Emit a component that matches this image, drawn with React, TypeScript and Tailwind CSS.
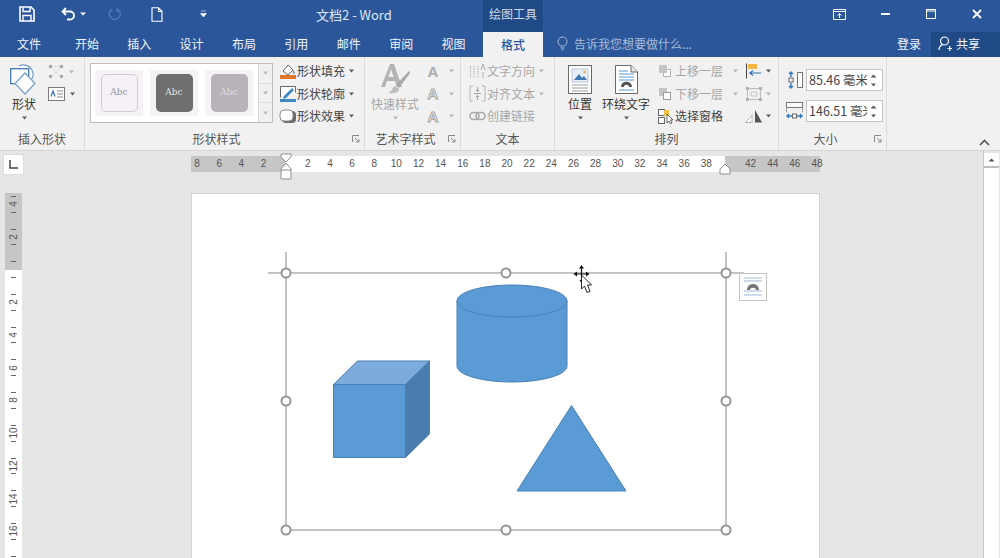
import React from "react";

const TABS = ["插入", "设计", "布局", "引用", "邮件", "审阅", "视图"];
const RULER_LEFT = ["8", "6", "4", "2", ""];
const RULER_MID = ["2", "4", "6", "8", "10", "12", "14", "16", "18", "20", "22", "24", "26", "28", "30", "32", "34", "36", "38", "", "42", "44", "46", "48"];
const RULER_V = ["4", "2", "", "2", "4", "6", "8", "10", "12", "14", "16", ""];

const Caret = ({ light = false }: { light?: boolean }) => (
  <svg width="7" height="4" viewBox="0 0 7 4" className="shrink-0">
    <path d="M1 0.5h5L3.500 3.500z" fill={light ? "#b5b5b5" : "#5a5a5a"} />
  </svg>
);

const Launcher = () => (
  <svg width="8" height="8" viewBox="0 0 8 8" className="shrink-0">
    <path d="M0.500 7V0.500H7M3 3l4 4M7 4v3H4" fill="none" stroke="#8a8a8a" strokeWidth="1" />
  </svg>
);

const Group = ({
  label,
  width,
  labelPad = "",
  launcher,
  children,
}: {
  label: string;
  width: string;
  labelPad?: string;
  launcher?: boolean;
  children: React.ReactNode;
}) => (
  <div className={`${width} h-full shrink-0 flex flex-col border-r border-[#dcdcdc]`}>
    <div className="h-[73px] flex items-start">{children}</div>
    <div className="flex-1 flex items-center px-1 pb-[3px]">
      <span className={`flex-1 text-center text-[12px] leading-none text-[#555] ${labelPad}`}>{label}</span>
      {launcher && <Launcher />}
    </div>
  </div>
);

const ShapesIcon = () => (
  <svg width="29" height="32" viewBox="0 0 29 32">
    <path d="M9 3a9.500 9.500 0 1 1 9 17" fill="#fff" stroke="#6d9ac6" strokeWidth="1.200" />
    <rect x="0.700" y="5.700" width="18" height="15" fill="#fff" stroke="#3f78ae" strokeWidth="1.300" />
    <path d="M15 10l10 10.500L15 31 5 20.500z" fill="#fff" stroke="#7aa3cb" strokeWidth="1.300" />
  </svg>
);

const EditPointsIcon = () => (
  <svg width="16" height="15" viewBox="0 0 16 15">
    <path d="M3 3L13 2M13 2L8 8M3 3l5 5M8 8l-5 5M8 8l5 5" fill="none" stroke="#cfcfcf" strokeDasharray="2 1.500" />
    <g fill="#a8a8a8">
      <rect x="1" y="1" width="3" height="3" />
      <rect x="12" y="1" width="3" height="3" />
      <rect x="1" y="11" width="3" height="3" />
      <rect x="12" y="11" width="3" height="3" />
    </g>
  </svg>
);

const TextBoxIcon = () => (
  <svg width="17" height="14" viewBox="0 0 17 14">
    <rect x="0.500" y="0.500" width="16" height="13" fill="#fff" stroke="#7a7a7a" />
    <path d="M3 9.500L5 4l2 5.500" fill="none" stroke="#2f6fb0" strokeWidth="1.200" />
    <path d="M9 4h6M9 7h6M9 10h6" stroke="#8a8a8a" />
  </svg>
);

const FillIcon = () => (
  <svg width="18" height="18" viewBox="0 0 18 18">
    <path d="M4 9l5-6 5 5-5 5z" fill="#fff" stroke="#666" />
    <path d="M14 8c2 2 2 4 1 4s-1-2-1-4z" fill="#3f86c6" />
    <rect x="1" y="13" width="16" height="4" fill="#e0752d" />
  </svg>
);

const OutlineIcon = () => (
  <svg width="18" height="18" viewBox="0 0 18 18">
    <path d="M1.500 12.500V1.500h15v6" fill="#fff" stroke="#666" />
    <path d="M5 11l8-8 2 2-8 8-3 1z" fill="#3f86c6" />
    <rect x="1" y="14" width="16" height="3" fill="#3f86c6" />
  </svg>
);

const EffectIcon = () => (
  <svg width="18" height="15" viewBox="0 0 18 15">
    <rect x="3" y="2" width="14" height="12" rx="4" fill="#6b6b6b" />
    <rect x="1" y="1" width="13" height="11" rx="4" fill="#fff" stroke="#8a8a8a" />
  </svg>
);

const QuickStyleIcon = () => (
  <svg width="32" height="32" viewBox="0 0 32 32">
    <path d="M2 24L11 1h4l8 23h-5l-2-6H8l-2 6zM9.500 14h5L12 6z" fill="#b4b4b4" fillRule="evenodd" />
    <path d="M30 8L17 22l3 3L31 10z" fill="#a8a8a8" />
    <path d="M16 23c-3 1-2 5-7 7 5 1 11 0 11-4z" fill="#bdbdbd" />
  </svg>
);

const SmallA = ({ outline = false }: { outline?: boolean }) => (
  <span
    className={`w-[14px] text-center text-[15px] leading-none font-bold [font-family:'Liberation_Sans',sans-serif] ${
      outline ? "text-[#f1f1f1] [-webkit-text-stroke:1px_#a9a9a9]" : "text-[#a9a9a9]"
    }`}
  >
    A
  </span>
);

const TextDirIcon = () => (
  <svg width="17" height="16" viewBox="0 0 17 16">
    <path d="M1.500 3v12M5 3v12M9 3v12" stroke="#b0b0b0" strokeDasharray="1.500 1" />
    <path d="M12 7l2-6 2 6" fill="none" stroke="#b0b0b0" />
    <path d="M14 9v6" stroke="#b0b0b0" />
  </svg>
);

const AlignIcon = () => (
  <svg width="17" height="17" viewBox="0 0 17 17">
    <path d="M4 1H1v15h3M13 1h3v15h-3" fill="none" stroke="#b5b5b5" />
    <path d="M5 8.500h7M8.500 2v4M8.500 11v4" stroke="#a0a0a0" />
    <path d="M6.500 5h4L8.500 7zM6.500 12h4l-2-2z" fill="#a0a0a0" />
  </svg>
);

const LinkIcon = () => (
  <svg width="17" height="10" viewBox="0 0 17 10">
    <rect x="1" y="1.500" width="9" height="7" rx="3.500" fill="none" stroke="#a9a9a9" strokeWidth="1.600" />
    <rect x="7" y="1.500" width="9" height="7" rx="3.500" fill="none" stroke="#a9a9a9" strokeWidth="1.600" />
  </svg>
);

const PositionIcon = () => (
  <svg width="24" height="29" viewBox="0 0 24 29">
    <rect x="0.500" y="0.500" width="23" height="28" fill="#fff" stroke="#6a6a6a" />
    <path d="M4 4h16v13H4z" fill="#e8eef6" stroke="#b8c6d8" />
    <path d="M6 15l5-6 3 4 2-2 3 4z" fill="#3f78b4" />
    <circle cx="16.500" cy="7" r="1.200" fill="#e8a33d" />
    <path d="M4 20h16M4 23h16M4 26h16" stroke="#a0a0a0" />
  </svg>
);

const WrapIcon = () => (
  <svg width="23" height="29" viewBox="0 0 23 29">
    <path d="M0.500 0.500H16L22.500 7V28.500H0.500z" fill="#fff" stroke="#6a6a6a" />
    <path d="M16 0.500V7h6.500" fill="#e6e6e6" stroke="#6a6a6a" />
    <path d="M4 6h9M4 9h15M4 12h15M4 15h15M4 25h15" stroke="#5b9bd5" />
    <path d="M6 22c0-7 11-7 11 0h-3c0-3-5-3-5 0z" fill="#555" />
  </svg>
);

const LayerIcon = ({ up }: { up: boolean }) => (
  <svg width="15" height="14" viewBox="0 0 15 14">
    {up ? (
      <>
        <rect x="5.500" y="5.500" width="7" height="7" fill="#fff" stroke="#b5b5b5" />
        <rect x="1" y="1" width="8" height="8" fill="#c4c4c4" />
      </>
    ) : (
      <>
        <rect x="1" y="1" width="8" height="8" fill="#c4c4c4" />
        <rect x="5.500" y="5.500" width="7" height="7" fill="#fff" stroke="#9a9a9a" />
      </>
    )}
  </svg>
);

const SelectionIcon = () => (
  <svg width="16" height="16" viewBox="0 0 16 16">
    <rect x="0.500" y="1.500" width="6" height="6" fill="#fff" stroke="#666" />
    <rect x="0.500" y="9.500" width="6" height="6" fill="#fff" stroke="#666" />
    <rect x="6" y="2" width="5" height="6" fill="#f0c040" />
    <path d="M9 6v9l2-2 1.500 3 1.500-1-1.500-3h2.500z" fill="#fff" stroke="#444" strokeWidth="0.800" />
  </svg>
);

const AlignObjIcon = () => (
  <svg width="18" height="16" viewBox="0 0 18 16">
    <path d="M1.500 0.500v15" stroke="#444" />
    <rect x="3" y="1" width="9" height="5" fill="#f0b840" />
    <path d="M16 10H5M8 7.500L5 10l3 2.500" fill="none" stroke="#2f6fb0" strokeWidth="1.200" />
  </svg>
);

const GroupObjIcon = () => (
  <svg width="18" height="16" viewBox="0 0 18 16">
    <rect x="2.500" y="2.500" width="13" height="11" fill="none" stroke="#bdbdbd" />
    <path d="M6 6h6v4H6z" fill="none" stroke="#c9c9c9" />
    <g fill="#b0b0b0">
      <rect x="1" y="1" width="3" height="3" />
      <rect x="14" y="1" width="3" height="3" />
      <rect x="1" y="12" width="3" height="3" />
      <rect x="14" y="12" width="3" height="3" />
    </g>
  </svg>
);

const RotateIcon = () => (
  <svg width="18" height="15" viewBox="0 0 18 15">
    <path d="M1 13.500L7 6v7.500z" fill="#fff" stroke="#999" strokeDasharray="2 1" />
    <path d="M10 1l7 12.500h-7z" fill="#555" />
  </svg>
);

const HeightIcon = () => (
  <svg width="17" height="18" viewBox="0 0 17 18">
    <rect x="11.500" y="1.500" width="5" height="15" fill="#fff" stroke="#777" />
    <path d="M5 1v5M5 12v5M3 3l2-2 2 2M3 15l2 2 2-2" fill="none" stroke="#2f78c0" strokeWidth="1.400" />
    <rect x="3" y="7" width="4" height="4" fill="#fff" stroke="#666" />
  </svg>
);

const WidthIcon = () => (
  <svg width="17" height="18" viewBox="0 0 17 18">
    <rect x="0.500" y="0.500" width="16" height="5" fill="#fff" stroke="#777" />
    <path d="M0.500 5.500v5M16.500 5.500v5" stroke="#999" />
    <path d="M1 14h5M11 14h5M3 12l-2 2 2 2M14 12l2 2-2 2" fill="none" stroke="#2f78c0" strokeWidth="1.400" />
    <rect x="6.500" y="12" width="4" height="4" fill="#fff" stroke="#666" />
  </svg>
);

const ListRow = ({
  icon,
  text,
  muted,
  caret = true,
  caretGap = "ml-[3px]",
}: {
  icon: React.ReactNode;
  text: string;
  muted?: boolean;
  caret?: boolean;
  caretGap?: string;
}) => (
  <div className="h-[22.500px] flex items-center">
    <div className="w-[19px] flex justify-center shrink-0">{icon}</div>
    <span className={`text-[12px] leading-none whitespace-nowrap ${muted ? "text-[#a6a6a6]" : "text-[#444]"}`}>{text}</span>
    {caret && (
      <span className={caretGap}>
        <Caret light={muted} />
      </span>
    )}
  </div>
);

const Thumb = ({ box, text }: { box: string; text: string }) => (
  <div className="w-[48px] h-[46px] bg-[#f5f3f6] flex items-center justify-center">
    <div
      className={`w-[37px] h-[38px] rounded-[5px] flex items-center justify-center text-[9px] [font-family:'DejaVu_Serif',serif] ${box} ${text}`}
    >
      Abc
    </div>
  </div>
);

const BigButton = ({
  icon,
  label,
  muted,
  width,
}: {
  icon: React.ReactNode;
  label: string;
  muted?: boolean;
  width: string;
}) => (
  <div className={`${width} flex flex-col items-center shrink-0`}>
    <div className="h-[32px] mt-[6px] flex items-center justify-center">{icon}</div>
    <span className={`mt-[1px] text-[12px] leading-[16px] whitespace-nowrap ${muted ? "text-[#a6a6a6]" : "text-[#333]"}`}>{label}</span>
    <span className="mt-[4px] leading-none flex">
      <Caret light={muted} />
    </span>
  </div>
);

const Spin = ({ text }: { text: string }) => (
  <div className="w-[77px] h-[22px] bg-white border border-[#c4c4c4] flex items-center pl-[2px] pr-[2px]">
    <span className="w-[58px] overflow-hidden whitespace-nowrap text-[12.500px] leading-none text-[#444]">{text}</span>
    <div className="flex-1 flex flex-col items-center gap-[5px]">
      <svg width="7" height="4" viewBox="0 0 7 4">
        <path d="M0.500 3.500h6L3.500 0.500z" fill="#555" />
      </svg>
      <Caret />
    </div>
  </div>
);

const Canvas = () => (
  <svg width="628" height="364" viewBox="192 194 628 364" className="absolute left-0 top-0">
    <path d="M286 252v278M268 273h18M726 252v278M726 273h18M286 273h440M286 530h440" fill="none" stroke="#b0b0b0" strokeWidth="1.500" />
    <path
      d="M457 301V366C457 375 482 382 512 382S567 375 567 366V301C567 292 542 285 512 285S457 292 457 301Z"
      fill="#5b9bd5"
      stroke="#4a80b5"
      strokeWidth="1"
    />
    <path d="M457 301C457 310 482 317 512 317S567 310 567 301" fill="none" stroke="#4a80b5" />
    <path d="M333.500 384.500H405.500V457.500H333.500Z" fill="#5b9bd5" stroke="#4a80b5" />
    <path d="M333.500 384.500L357.500 361H429.500L405.500 384.500Z" fill="#7cabdc" stroke="#4a80b5" />
    <path d="M405.500 384.500L429.500 361V434L405.500 457.500Z" fill="#4a7cae" stroke="#4a80b5" />
    <path d="M571.500 405.500L626 491H517Z" fill="#5b9bd5" stroke="#4a80b5" />
    {[
      [286, 273],
      [506, 273],
      [726, 273],
      [286, 401],
      [726, 401],
      [286, 530],
      [506, 530],
      [726, 530],
    ].map(([cx, cy]) => (
      <circle key={`${cx}-${cy}`} cx={cx} cy={cy} r="4.500" fill="#fff" stroke="#949494" strokeWidth="2" />
    ))}
    <g>
      <rect x="739.500" y="273.500" width="27" height="27" fill="#fff" stroke="#c3c3c3" />
      <path d="M744 278h18M744 281h18M744 291h18M744 295h18" stroke="#9db6d0" strokeWidth="1.200" />
      <path d="M747 290c0-8 12-8 12 0h-3c0-3-6-3-6 0z" fill="#777" />
    </g>
    <g>
      <path d="M581.500 268v12M575 274h13" stroke="#111" strokeWidth="1.200" />
      <path d="M581.500 265l-2.500 3.500h5zM581.500 283l-2-3h4zM573.500 274l3.500-2.500v5zM589.500 274l-3.500-2.500v5z" fill="#111" />
      <path d="M581.500 275v14l3-3 2.500 6.500 3-1.200-2.500-6.300h4z" fill="#fff" stroke="#111" strokeWidth="0.900" />
    </g>
  </svg>
);

export default function App() {
  return (
    <div className="w-[1000px] h-[558px] overflow-hidden flex flex-col bg-[#e6e6e6] [font-family:'Noto_Sans_CJK_SC','Liberation_Sans',sans-serif]">
      {/* title bar */}
      <div className="h-[32px] shrink-0 bg-[#2b579a] flex text-white">
        <div className="w-[483px] flex items-center pb-[4px] shrink-0">
          <svg width="16" height="16" viewBox="0 0 16 16" className="ml-[19px]">
            <path d="M1 1h11l3 3v11H1z" fill="none" stroke="#fff" strokeWidth="1.600" />
            <path d="M4 1.500v4h7v-4M4 15V9.500h8V15" fill="none" stroke="#fff" strokeWidth="1.400" />
          </svg>
          <svg width="16" height="14" viewBox="0 0 16 14" className="ml-[26px]">
            <path d="M5 1L1.500 4.500 5 8M2 4.500h7a4 4 0 0 1 0 8H6" fill="none" stroke="#fff" strokeWidth="1.800" />
          </svg>
          <span className="ml-[3px]">
            <svg width="6" height="4" viewBox="0 0 6 4">
              <path d="M0 0.500h6L3 3.500z" fill="#fff" />
            </svg>
          </span>
          <svg width="14" height="14" viewBox="0 0 14 14" className="ml-[22px]">
            <path d="M9 2a5.500 5.500 0 1 1-4.500 0M9 0.500V4H12.500" fill="none" stroke="#4f78b3" strokeWidth="1.500" />
          </svg>
          <svg width="12" height="15" viewBox="0 0 12 15" className="ml-[29px]">
            <path d="M1 0.800h6.500L11 4.300v10H1z M7.500 1v3.500H11" fill="none" stroke="#fff" strokeWidth="1.100" />
          </svg>
          <svg width="7" height="8" viewBox="0 0 7 8" className="ml-[37px]">
            <path d="M1 1h5M0.500 3.500h6L3.500 7z" fill="#fff" stroke="#fff" strokeWidth="0.600" />
          </svg>
          <span className="ml-[109px] text-[13px] leading-none text-[#dfe7f3]">文档2 - Word</span>
        </div>
        <div className="w-[60px] bg-[#1f4a85] flex items-center justify-center pb-[4px] text-[12px] leading-none text-[#cfd9e8] shrink-0">
          绘图工具
        </div>
        <div className="flex-1 flex items-center pb-[4px]">
          <svg width="13" height="11" viewBox="0 0 13 11" className="ml-[290px]">
            <path d="M0.500 0.500h12v10h-12zM0.500 2.500h12M6.500 9V4.500M4.500 6.500l2-2 2 2" fill="none" stroke="#fff" />
          </svg>
          <div className="ml-[35px] w-[9px] h-[2px] bg-white" />
          <svg width="10" height="10" viewBox="0 0 10 10" className="ml-[36px]">
            <path d="M0.500 0.500h9v9h-9zM0.500 2h9" fill="none" stroke="#fff" strokeWidth="1.100" />
          </svg>
          <svg width="10" height="10" viewBox="0 0 10 10" className="ml-[36px]">
            <path d="M1 1l8 8M9 1l-8 8" stroke="#fff" strokeWidth="1.800" />
          </svg>
        </div>
      </div>

      {/* tabs */}
      <div className="h-[25px] shrink-0 bg-[#2b579a] flex items-center text-[12px] leading-none text-[#f2f5fa]">
        <span className="w-[58px] text-center pb-[2px]">文件</span>
        <span className="w-[52px] ml-[3px] text-center pb-[2px]">开始</span>
        {TABS.map((t) => (
          <span key={t} className="w-[52.400px] text-center pb-[2px]">
            {t}
          </span>
        ))}
        <div className="ml-[3.200px] w-[60px] h-full bg-[#f1f1f1] text-[#2b579a] flex items-center justify-center font-medium">格式</div>
        <div className="ml-[14px] flex items-center gap-[6px] pb-[2px] text-[#a9bcd8] text-[12px]">
          <svg width="11" height="15" viewBox="0 0 11 15">
            <path d="M3.500 10C2 8.500 1 7.500 1 5.500a4.500 4.500 0 0 1 9 0C10 7.500 9 8.500 7.500 10zM3.500 12h4M4.500 14h2" fill="none" stroke="#a9bcd8" />
          </svg>
          告诉我您想要做什么...
        </div>
        <span className="ml-auto pb-[2px]">登录</span>
        <div className="ml-[10px] w-[69px] h-full bg-[#1f4a85] flex items-center pl-[7px] gap-[4px] pb-[2px]">
          <svg width="14" height="15" viewBox="0 0 14 15">
            <circle cx="6.500" cy="5" r="4" fill="none" stroke="#fff" strokeWidth="1.200" />
            <path d="M1 14c0-3 1.500-4.500 3.500-5.500M9.500 12.500h4.500M11.750 10v5" fill="none" stroke="#fff" strokeWidth="1.200" />
          </svg>
          共享
        </div>
      </div>

      {/* ribbon */}
      <div className="h-[94px] shrink-0 bg-[#f1f1f1] border-b border-[#d4d4d4] flex">
        <Group label="插入形状" width="w-[85px]">
          <BigButton icon={<ShapesIcon />} label="形状" width="w-[48px]" />
          <div className="pt-[7px] flex flex-col gap-[7px]">
            <div className="h-[15px] flex items-center gap-[4px]">
              <EditPointsIcon />
              <Caret light />
            </div>
            <div className="h-[15px] flex items-center gap-[4px]">
              <TextBoxIcon />
              <Caret />
            </div>
          </div>
        </Group>

        <Group label="形状样式" width="w-[280px]" labelPad="pr-[8px]" launcher>
          <div className="ml-[5px] mt-[6px] w-[183px] h-[60px] bg-white border border-[#bdbdbd] flex shrink-0">
            <div className="flex-1 flex items-center gap-[7px] pl-[4px]">
              <Thumb box="bg-[#f5f1f6] border border-[#d3c9d6]" text="text-[#9b94a0]" />
              <Thumb box="bg-[#6f6f6f]" text="text-[#e4e4e4]" />
              <Thumb box="bg-[#b8b3ba]" text="text-[#e2dee4]" />
            </div>
            <div className="w-[14px] flex flex-col bg-[#f1f1f1] border-l border-[#d9d9d9] text-[#b5b5b5]">
              {[0, 1, 2].map((i) => (
                <div key={i} className="flex-1 flex items-center justify-center border-b border-[#dedede] last:border-b-0">
                  <Caret light />
                </div>
              ))}
            </div>
          </div>
          <div className="ml-[5px] mt-[3px] flex flex-col">
            <ListRow icon={<FillIcon />} text="形状填充" />
            <ListRow icon={<OutlineIcon />} text="形状轮廓" />
            <ListRow icon={<EffectIcon />} text="形状效果" />
          </div>
        </Group>

        <Group label="艺术字样式" width="w-[96px]" labelPad="pr-[6px]" launcher>
          <BigButton icon={<QuickStyleIcon />} label="快速样式" muted width="w-[60px]" />
          <div className="ml-[1px] mt-[3px] flex flex-col">
            {[false, true, true].map((o, i) => (
              <div key={i} className="h-[22.500px] flex items-center gap-[8px]">
                <SmallA outline={o} />
                <Caret light />
              </div>
            ))}
          </div>
        </Group>

        <Group label="文本" width="w-[94px]">
          <div className="ml-[7px] mt-[3px] flex flex-col">
            <ListRow icon={<TextDirIcon />} text="文字方向" muted />
            <ListRow icon={<AlignIcon />} text="对齐文本" muted />
            <ListRow icon={<LinkIcon />} text="创建链接" muted caret={false} />
          </div>
        </Group>

        <Group label="排列" width="w-[224px]">
          <BigButton icon={<PositionIcon />} label="位置" width="w-[50px]" />
          <div className="-ml-[3px]">
            <BigButton icon={<WrapIcon />} label="环绕文字" width="w-[48px]" />
          </div>
          <div className="ml-[6px] mt-[3px] flex flex-col w-[89px]">
            <ListRow icon={<LayerIcon up />} text="上移一层" muted caretGap="ml-[9px]" />
            <ListRow icon={<LayerIcon up={false} />} text="下移一层" muted caretGap="ml-[9px]" />
            <ListRow icon={<SelectionIcon />} text="选择窗格" caret={false} />
          </div>
          <div className="mt-[3px] flex flex-col">
            <div className="h-[22.500px] flex items-center gap-[2px]">
              <AlignObjIcon />
              <Caret />
            </div>
            <div className="h-[22.500px] flex items-center gap-[2px]">
              <GroupObjIcon />
              <Caret light />
            </div>
            <div className="h-[22.500px] flex items-center gap-[2px]">
              <RotateIcon />
              <Caret />
            </div>
          </div>
        </Group>

        <Group label="大小" width="w-[108px]" labelPad="pr-[6px]" launcher>
          <div className="ml-[7px] mt-[12px] flex flex-col gap-[9px]">
            <div className="flex items-center gap-[3px]">
              <HeightIcon />
              <Spin text="85.46 毫米" />
            </div>
            <div className="flex items-center gap-[3px]">
              <WidthIcon />
              <Spin text="146.51 毫米" />
            </div>
          </div>
        </Group>

        <div className="flex-1 flex items-end justify-end pr-[10px] pb-[4px]">
          <svg width="11" height="7" viewBox="0 0 11 7">
            <path d="M1 6l4.500-4.500L10 6" fill="none" stroke="#555" strokeWidth="1.600" />
          </svg>
        </div>
      </div>

      {/* document area */}
      <div className="flex-1 flex overflow-hidden">
        <div className="w-[27px] shrink-0 flex flex-col">
          <div className="ml-[3px] mt-[3px] w-[21px] h-[21px] bg-white border border-[#dcdcdc] flex items-center justify-center">
            <svg width="9" height="9" viewBox="0 0 9 9">
              <path d="M1 0v8h8" fill="none" stroke="#444" strokeWidth="1.500" />
            </svg>
          </div>
          <div className="ml-[5px] mt-[18px] w-[17px] flex-1 overflow-hidden bg-[linear-gradient(#c6c6c6_77px,#fff_77px)]">
            <div className="-mt-[5px] flex flex-col">
              {RULER_V.map((n, i) => (
                <div key={i} className="h-[32.700px] shrink-0 flex flex-col items-center justify-between py-[8px]">
                  <div className="w-[5px] h-px bg-[#666]" />
                  {n && <span className="-rotate-90 text-[10px] leading-none text-[#555] [font-family:'Liberation_Sans',sans-serif]">{n}</span>}
                  <div className="w-[5px] h-px bg-[#666]" />
                </div>
              ))}
            </div>
          </div>
        </div>

        <div className="flex-1 flex flex-col">
          <div className="relative ml-[164px] mt-[5px] w-[629px] h-[16px] flex bg-[linear-gradient(90deg,#c6c6c6_94px,#fff_94px,#fff_534px,#c6c6c6_534px)] text-[10px] leading-[16px] text-[#555] [font-family:'Liberation_Sans',sans-serif]">
            <div className="-ml-[5px] flex">
              {[...RULER_LEFT, ...RULER_MID].map((n, i) => (
                <span key={i} className="w-[22.150px] shrink-0 text-center">
                  {n}
                </span>
              ))}
            </div>
            <svg width="14" height="28" viewBox="0 0 14 28" className="absolute left-[88px] -top-[3px]">
              <path d="M2 1h10v3L7 9 2 4zM2 16l5-6 5 6v10H2z M2 17h10" fill="#fff" stroke="#8f8f8f" />
            </svg>
            <svg width="12" height="12" viewBox="0 0 12 12" className="absolute left-[528px] top-[7px]">
              <path d="M1 6l5-5 5 5v5H1z" fill="#fff" stroke="#8f8f8f" />
            </svg>
          </div>
          <div className="relative ml-[165px] mt-[22px] w-[627px] flex-1 bg-white outline outline-[#d2d2d2]">
            <Canvas />
          </div>
        </div>

        <div className="w-[17px] shrink-0 flex flex-col pt-[2px] pr-[1px] border-l border-[#c8c8c8]">
          <div className="h-[15px] bg-white border-b-2 border-[#bdbdbd] flex items-center justify-center">
            <svg width="7" height="4" viewBox="0 0 7 4">
              <path d="M0.500 3.500h6L3.500 0.500z" fill="#555" />
            </svg>
          </div>
          <div className="flex-1 bg-white" />
        </div>
      </div>
    </div>
  );
}
